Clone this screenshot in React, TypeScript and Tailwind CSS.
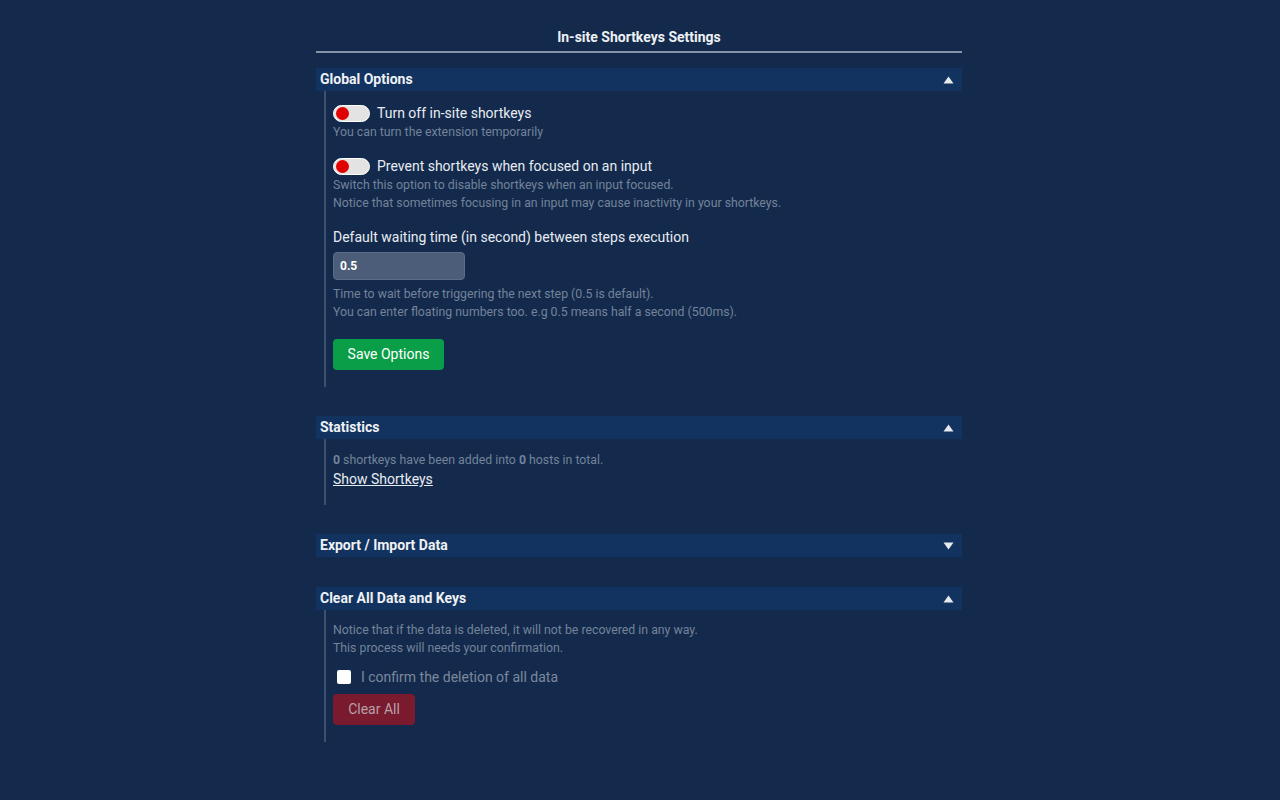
import React, { useState } from "react";

function Toggle() {
  return (
    <span className="inline-flex h-[17px] w-[37px] shrink-0 items-center rounded-full border border-white bg-[#e3e3e3] pl-[2px]">
      <span className="h-[13px] w-[13px] rounded-full bg-[#e00000]" />
    </span>
  );
}

function SectionHeader({ title, open }: { title: string; open: boolean }) {
  return (
    <div className="flex h-[23px] items-center justify-between bg-[#12335f] pl-1 pr-[8px]">
      <span className="text-[14px] font-bold text-[#eef1f5]">{title}</span>
      {open ? (
        <svg width="11" height="8" viewBox="0 0 11 8">
          <path d="M5.5 0.5 L10.5 7.5 L0.5 7.5 Z" fill="#e6e9ee" />
        </svg>
      ) : (
        <svg width="11" height="8" viewBox="0 0 11 8">
          <path d="M0.5 0.5 L10.5 0.5 L5.5 7.5 Z" fill="#e6e9ee" />
        </svg>
      )}
    </div>
  );
}

function SectionBody({ children }: { children: React.ReactNode }) {
  return (
    <div className="ml-[8px] border-l-2 border-[#3e506b] pl-[7px]">{children}</div>
  );
}

export default function App() {
  const [confirm, setConfirm] = useState(false);
  return (
    <div
      className="flex min-h-[800px] w-full justify-center bg-[#132a4c] pr-[2px] text-[#e8ecf2]"
      style={{ fontFamily: "Roboto, 'Liberation Sans', sans-serif" }}
    >
      <div className="w-[646px] pt-[27px]">
        <h1 className="h-[20px] text-center text-[14px] font-bold leading-[20px] text-[#eef1f5]">
          In-site Shortkeys Settings
        </h1>
        <div className="mt-[4px] h-[2px] bg-[#8493a8]" />

        {/* Global options */}
        <div className="mt-[15px]">
          <SectionHeader title="Global Options" open />
          <SectionBody>
            <div className="pb-[17px] pt-[12px]">
              <div className="flex h-[20px] items-center gap-[7px]">
                <Toggle />
                <span className="text-[14px]">Turn off in-site shortkeys</span>
              </div>
              <p className="text-[12.3px] leading-[18px] text-[#74839a]">
                You can turn the extension temporarily
              </p>

              <div className="mt-[15px] flex h-[20px] items-center gap-[7px]">
                <Toggle />
                <span className="text-[14px]">Prevent shortkeys when focused on an input</span>
              </div>
              <p className="text-[12.3px] leading-[18px] text-[#74839a]">
                Switch this option to disable shortkeys when an input focused.
                <br />
                Notice that sometimes focusing in an input may cause inactivity in your shortkeys.
              </p>

              <div className="mt-[15px] h-[20px] text-[14px] leading-[20px]">
                Default waiting time (in second) between steps execution
              </div>
              <input
                defaultValue="0.5"
                className="mt-[5px] h-[28px] w-[132px] rounded-[4px] border border-[#5b6c86] bg-[#4b5d78] px-[6px] text-[12px] font-bold text-white outline-none"
              />
              <p className="mt-[5px] text-[12.3px] leading-[18px] text-[#74839a]">
                Time to wait before triggering the next step (0.5 is default).
                <br />
                You can enter floating numbers too. e.g 0.5 means half a second (500ms).
              </p>
              <button className="mt-[18px] h-[31px] w-[111px] rounded-[4px] bg-[#0a9e48] text-[14px] text-white">
                Save Options
              </button>
            </div>
          </SectionBody>
        </div>

        {/* Statistics */}
        <div className="mt-[29px]">
          <SectionHeader title="Statistics" open />
          <SectionBody>
            <div className="pb-[16px] pt-[12px]">
              <p className="text-[12.3px] leading-[18px] text-[#74839a]">
                <b>0</b> shortkeys have been added into <b>0</b> hosts in total.
              </p>
              <a href="#" className="block h-[20px] text-[14px] leading-[20px] text-[#e8ecf2] underline">
                Show Shortkeys
              </a>
            </div>
          </SectionBody>
        </div>

        {/* Export / Import */}
        <div className="mt-[29px]">
          <SectionHeader title="Export / Import Data" open={false} />
        </div>

        {/* Clear */}
        <div className="mt-[30px]">
          <SectionHeader title="Clear All Data and Keys" open />
          <SectionBody>
            <div className="pb-[17px] pt-[11px]">
              <p className="text-[12.3px] leading-[18px] text-[#74839a]">
                Notice that if the data is deleted, it will not be recovered in any way.
                <br />
                This process will needs your confirmation.
              </p>
              <label className="mt-[10px] flex h-[20px] items-center gap-[10px] pl-[4px]">
                <input
                  type="checkbox"
                  checked={confirm}
                  onChange={(e) => setConfirm(e.target.checked)}
                  className="h-[14px] w-[14px] appearance-none rounded-[2px] bg-white"
                />
                <span className="text-[14px] text-[#7d889c]">I confirm the deletion of all data</span>
              </label>
              <button className="mt-[7px] h-[31px] w-[82px] rounded-[4px] bg-[#7a1a2e] text-[14px] text-[#b5a1ab]">
                Clear All
              </button>
            </div>
          </SectionBody>
        </div>
      </div>
    </div>
  );
}
